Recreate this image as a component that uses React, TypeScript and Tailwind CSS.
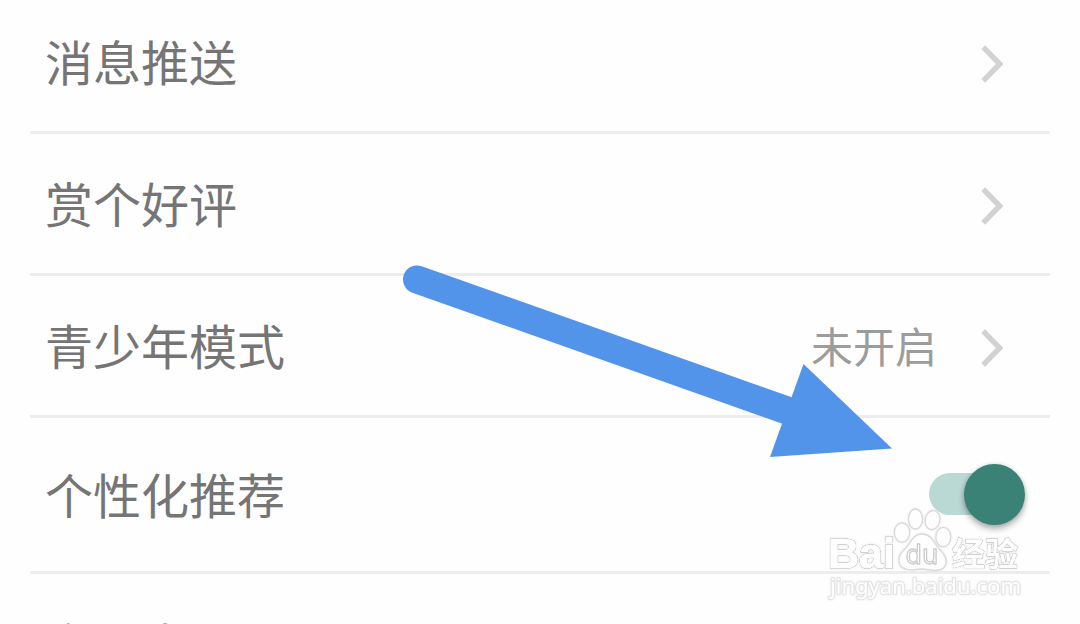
interface SettingRowProps {
    label: string
    value?: string
}

function Chevron() {
    return (
        <svg className="mt-1" width="22" height="38" viewBox="0 0 22 38" fill="none">
            <path d="M2.2 2.2 L18.7 19 L2.2 35.8" stroke="#d2d2d2" strokeWidth="5.4" />
        </svg>
    )
}

function SettingRow({ label, value }: SettingRowProps) {
    return (
        <div className="flex h-[142px] shrink-0 items-center justify-between border-b-3 border-[#ededed] pr-[47px] pl-[15px]">
            <span className="pb-[3px] text-[48px] leading-[70px] text-[#757575]">{label}</span>
            <div className="flex items-center gap-[44px]">
                {value && <span className="pb-px text-[42px] leading-[60px] text-[#9b9d9c]">{value}</span>}
                <Chevron />
            </div>
        </div>
    )
}

function Switch() {
    return (
        <div className="mb-px flex h-[42px] w-[96px] items-center justify-end rounded-l-full bg-linear-to-r from-[#bad8d4] from-70% to-transparent to-70%">
            <div className="mt-px size-[61px] shrink-0 rounded-full bg-[#3a8176] shadow-[0_4px_6px_rgba(0,0,0,0.3),0_0_4px_rgba(0,0,0,0.12)]" />
        </div>
    )
}

function Arrow() {
    return (
        <svg className="absolute top-0 left-0" width="1080" height="624" viewBox="0 0 1080 624">
            <path d="M417 279.5 L797 414" stroke="#5294e9" strokeWidth="28" strokeLinecap="round" />
            <path d="M803.5 364 L892 448.5 L770 457 Z" fill="#5294e9" />
        </svg>
    )
}

function Watermark() {
    return (
        <svg
            className="absolute top-[500px] left-[820px] drop-shadow-[0_0_1px_rgba(0,0,0,0.1)]"
            width="220"
            height="110"
            viewBox="820 500 220 110"
            fill="#fefefe"
            stroke="#d9d9d9"
            strokeWidth="1.3"
            strokeLinejoin="round"
        >
            {/* fattened letters with a thin grey rim */}
            <g stroke="#fefefe" strokeWidth="1.2" strokeLinejoin="miter" className="[filter:drop-shadow(0_0_0.7px_#909090)_drop-shadow(0_0_0.6px_#b8b8b8)]">
                <text x="828" y="568" fontSize="43" fontWeight="bold" fontFamily="'Liberation Sans', sans-serif" textLength="67" lengthAdjust="spacingAndGlyphs">Bai</text>
                <text x="952" y="565.5" fontSize="33" fontWeight="bold" strokeWidth="0.4" fontFamily="'Noto Sans CJK SC', sans-serif">经验</text>
            </g>
            <ellipse cx="902" cy="532.5" rx="7.6" ry="9.7" />
            <ellipse cx="915.5" cy="519" rx="7" ry="10" />
            <ellipse cx="932.5" cy="520" rx="7.3" ry="9.6" transform="rotate(12 932.5 520)" />
            <ellipse cx="943.3" cy="537" rx="7.5" ry="9.7" />
            <path d="M922 534 C933 534 934 545 942 552 C949 560 947 569 938 570 C932 571 928 569 922 569 C916 569 912 571 906 569 C897 567 897 556 904 550 C911 544 912 534 922 534 Z" />
            <text x="905.5" y="563.5" fontSize="26" stroke="#cccccc" fontFamily="'DejaVu Sans', sans-serif" textLength="33" lengthAdjust="spacingAndGlyphs">du</text>
            <text x="830" y="594" fontSize="22" stroke="#e4e4e4" strokeWidth="2" paintOrder="stroke" fontFamily="'Noto Sans', sans-serif" textLength="191" lengthAdjust="spacingAndGlyphs">jingyan.baidu.com</text>
        </svg>
    )
}

function App() {
    return (
        <div className="relative h-[624px] w-[1080px] overflow-hidden bg-[#fefefe] font-['Noto_Sans_CJK_SC',sans-serif]">
            <div className="-mt-2 flex flex-col px-[30px]">
                <SettingRow label="消息推送" />
                <SettingRow label="赏个好评" />
                <SettingRow label="青少年模式" value="未开启" />
                <div className="flex h-[156px] shrink-0 items-center justify-between border-b-3 border-[#ededed] pr-[25px] pl-[15px]">
                    <span className="pb-[3px] text-[48px] leading-[70px] text-[#757575]">个性化推荐</span>
                    <Switch />
                </div>
                <div className="pt-px">
                    <SettingRow label="字号大小" />
                </div>
            </div>
            <Arrow />
            <Watermark />
        </div>
    )
}

export default App
